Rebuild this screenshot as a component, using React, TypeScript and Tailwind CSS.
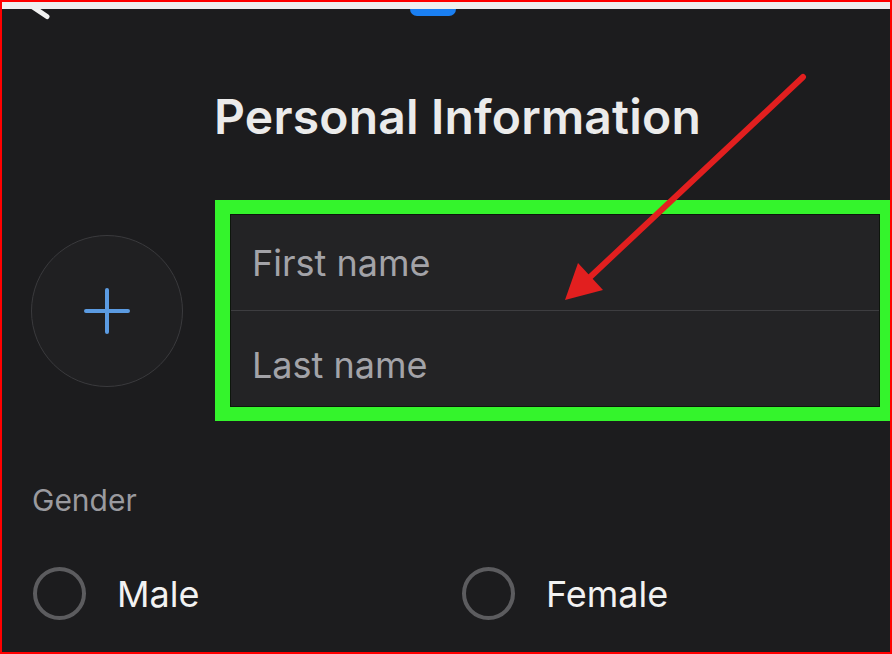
import React from "react";

const sans = { fontFamily: "Inter, 'Noto Sans', sans-serif" };

function BackChevron() {
  return (
    <svg width="30" height="20" viewBox="0 0 30 20" className="ml-[22px] shrink-0">
      <path d="M0 -8 L23 7.5" stroke="#f2f2f2" strokeWidth="5" strokeLinecap="round" fill="none" />
    </svg>
  );
}

function PlusIcon() {
  return (
    <svg width="48" height="48" viewBox="0 0 48 48">
      <path d="M24 3 V45 M3 24 H45" stroke="#5b9be2" strokeWidth="4" strokeLinecap="round" />
    </svg>
  );
}

function Radio({ label }: { label: string }) {
  return (
    <div className="flex items-center">
      <div className="h-[53px] w-[53px] shrink-0 rounded-full border-4 border-[#5c5c5f]" />
      <span className="ml-[31px] text-[36px] leading-none text-[#f2f2f2]">{label}</span>
    </div>
  );
}

function PointerArrow() {
  return (
    <svg
      className="pointer-events-none absolute -left-[2px] -top-[2px]"
      width="892"
      height="654"
      viewBox="0 0 892 654"
    >
      <line x1="803" y1="77" x2="588" y2="279" stroke="#e21f1f" strokeWidth="6" strokeLinecap="round" />
      <polygon points="565,300 578,263 603,290" fill="#e21f1f" />
    </svg>
  );
}

export default function App() {
  return (
    <div
      className="relative flex h-[654px] w-[892px] flex-col overflow-hidden border-2 border-[#ff0000] bg-[#1c1c1e]"
      style={sans}
    >
      <div className="h-[7px] shrink-0 bg-[#efefef]" />

      {/* top bar, mostly cut off */}
      <div className="flex h-[20px] shrink-0 items-start overflow-hidden">
        <BackChevron />
        <div className="ml-[356px] h-[7px] w-[46px] rounded-b-full bg-[#1a7ff2]" />
      </div>

      <h1 className="ml-[212px] mt-[64px] text-[48px] font-semibold leading-none tracking-[0.2px] text-[#ebebeb]">
        Personal Information
      </h1>

      <div className="mt-[59px] flex items-center">
        <div className="ml-[29px] flex h-[152px] w-[152px] shrink-0 items-center justify-center rounded-full border-[1.5px] border-[#3a3a3d] bg-[#202022]">
          <PlusIcon />
        </div>

        <div className="ml-[32px] h-[221px] w-[675px] shrink-0 border-b-[14px] border-l-[15px] border-r-[10px] border-t-[14px] border-[#34f42c]">
          <div className="flex h-full flex-col border border-[#0d160c] bg-[#232325]">
            <div className="flex flex-1 items-center pl-[21px]">
              <span className="text-[36px] leading-none text-[#a3a3a8]">First name</span>
            </div>
            <div className="h-px shrink-0 bg-[#3d3d40]" />
            <div className="flex flex-1 items-center pl-[21px]">
              <span className="mt-[13px] text-[36px] leading-none text-[#a3a3a8]">Last name</span>
            </div>
          </div>
        </div>
      </div>

      <div className="ml-[30px] mt-[64px] text-[30px] leading-none text-[#9a9a9f]">Gender</div>

      <div className="mt-[52px] grid grid-cols-[429px_1fr] pl-[31px]">
        <Radio label="Male" />
        <Radio label="Female" />
      </div>

      <PointerArrow />
    </div>
  );
}
